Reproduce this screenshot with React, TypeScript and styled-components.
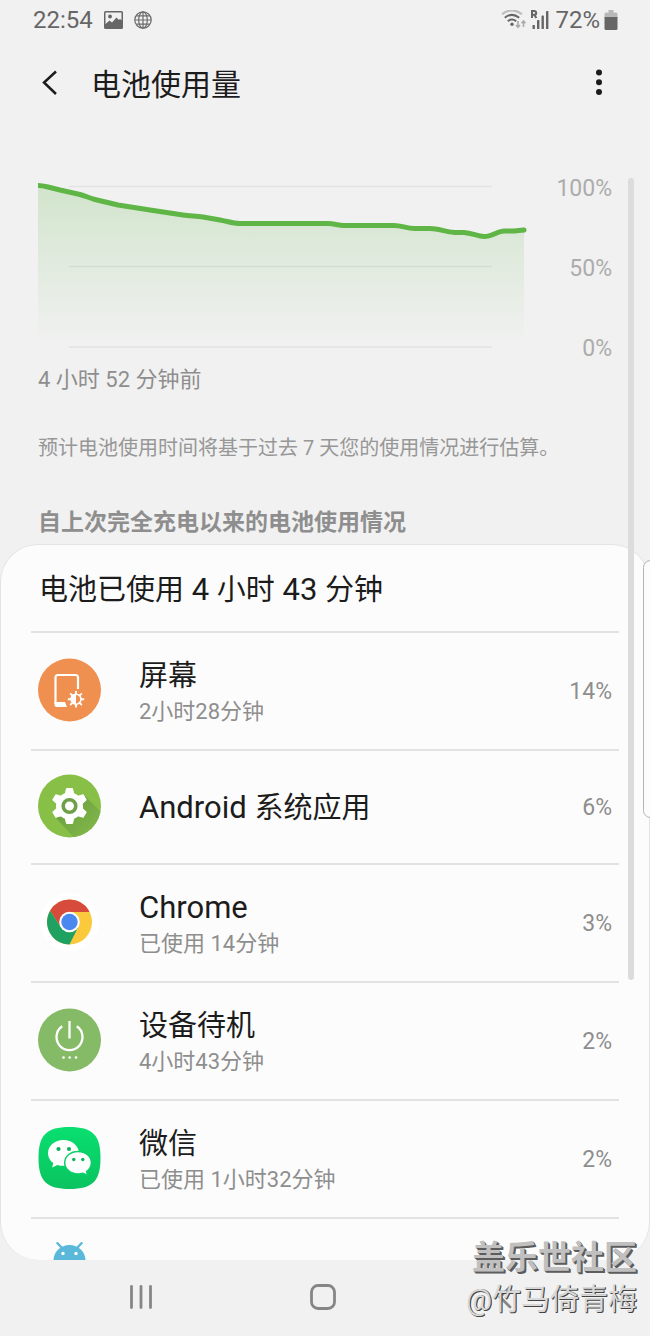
import React from 'react';
import styled, { createGlobalStyle, css } from 'styled-components';

const GlobalStyle = createGlobalStyle`
  * { box-sizing: border-box; }
  body {
    margin: 0;
    background: #f1f1f1;
    font-family: Roboto, "Noto Sans CJK SC", sans-serif;
    color: #1c1c1c;
  }
  button {
    appearance: none;
    border: 0;
    padding: 0;
    background: none;
    color: inherit;
    font: inherit;
    cursor: pointer;
  }
  h1, h2, h3, p, ul { margin: 0; padding: 0; font-weight: 400; }
  svg { display: block; }
`;

const Screen = styled.div`
  position: relative;
  display: flex;
  flex-direction: column;
  height: 100vh;
  overflow: hidden;
`;

const StatusBar = styled.div`
  display: flex;
  align-items: center;
  justify-content: space-between;
  height: 40px;
  padding: 0 32px 0 33px;
  font-size: 24px;
  line-height: 40px;
  color: #666;
`;

const StatusGroup = styled.div<{ $gap: number }>`
  display: flex;
  align-items: center;
  gap: ${(p) => p.$gap}px;
`;

const Header = styled.header`
  display: flex;
  align-items: center;
  height: 88px;
  padding: 0 39px 0 37px;
`;

const HeaderButton = styled.button`
  display: grid;
  place-items: center;
  width: 24px;
  height: 48px;
`;

const PageTitle = styled.h1`
  flex: 1;
  padding: 2px 0 0 30px;
  font-size: 30px;
  line-height: 44px;
`;

const Content = styled.main`
  flex: 1;
  min-height: 0;
  display: flex;
  flex-direction: column;
`;

const Chart = styled.section`
  display: flex;
  justify-content: space-between;
  height: 190px;
  margin: 46px 38px 0;
`;

const Plot = styled.svg`
  flex: 1;
  min-width: 0;
  height: 100%;
`;

const Axis = styled.div`
  display: flex;
  flex-direction: column;
  justify-content: space-between;
  width: 84px;
  text-align: right;
  font-size: 23px;
  line-height: 30px;
  color: #acacac;
`;

const Caption = styled.p`
  margin: 0 38px;
  font-size: 22px;
  line-height: 32px;
  color: #8e8e8e;
`;

const Note = styled.p`
  margin: 37px 38px 0;
  font-size: 20px;
  line-height: 30px;
  color: #979797;
`;

const SectionTitle = styled.h2`
  margin: 43px 38px 0;
  font-size: 23px;
  font-weight: 700;
  line-height: 34px;
  color: #8e8e8e;
`;

const Card = styled.section`
  flex: 1;
  min-height: 0;
  overflow: hidden;
  margin-top: 4px;
  padding: 0 30px;
  border: 1px solid #e4e4e4;
  border-bottom: 0;
  border-radius: 38px;
  background: #fcfcfc;
`;

const largeText = css`
  font-size: 29px;
  line-height: 40px;
`;

const CardTitle = styled.h3`
  ${largeText}
  padding: 25px 8px 21px;
`;

const Latin = styled.span`
  font-size: 31px;
`;

const Row = styled.li`
  display: flex;
  align-items: center;
  min-height: 114px;
  padding: 23px 7px 21px;
  border-top: 2px solid #e2e2e2;
`;

const RowIcon = styled.svg`
  flex: none;
  width: 64px;
  height: 64px;
  margin-bottom: 4px;
`;

const RowText = styled.div`
  flex: 1;
  padding-left: 37px;
`;

const RowTitle = styled.p`
  ${largeText}
`;

const RowDetail = styled.p`
  font-size: 22px;
  line-height: 32px;
  color: #8e8e8e;
`;

const Share = styled.span`
  font-size: 23px;
  line-height: 30px;
  color: #8e8e8e;
`;

const NavBar = styled.nav`
  display: grid;
  grid-template-columns: repeat(3, 1fr);
  flex: none;
  height: 76px;
  padding: 0 54px 2px 50px;
`;

const NavButton = styled.button`
  display: grid;
  place-items: center;
`;

const ScrollThumb = styled.div`
  position: absolute;
  top: 178px;
  right: 16px;
  width: 6px;
  height: 802px;
  border-radius: 3px;
  background: #dcdcdc;
`;

const EdgeHandle = styled.div`
  position: absolute;
  top: 560px;
  right: -8px;
  width: 15px;
  height: 258px;
  border: 1px solid #b4b4b4;
  border-radius: 8px;
  background: #fcfcfc;
`;

const Watermark = styled.div`
  position: absolute;
  right: 13px;
  bottom: 16px;
  text-align: right;
  pointer-events: none;
`;

const WatermarkName = styled.p`
  font-size: 33px;
  font-weight: 700;
  line-height: 44px;
  color: #c0c0c0;
  text-shadow: 1px 1px 0 #5c5c5c, 2px 2px 0 #5c5c5c;
`;

const WatermarkUser = styled.p`
  font-size: 29px;
  line-height: 40px;
  color: #d8d8d8;
  text-shadow: 1px 1px 0 #444, 1px 0 0 #666;
`;

/* Latin runs, with the spaces round them, are set slightly larger than the Chinese text. */
const MixedText = ({ text }: { text: string }) => (
  <>
    {text.split(/([A-Za-z0-9 ]+)/).map((part, i) =>
      i % 2 ? <Latin key={i}>{part}</Latin> : part
    )}
  </>
);

const PictureIcon = () => (
  <svg width="19" height="18" viewBox="0 0 19 18">
    <path fillRule="evenodd" fill="#666" d="M1.500 0h16a1.500 1.500 0 0 1 1.500 1.500v15a1.500 1.500 0 0 1-1.500 1.500h-16A1.500 1.500 0 0 1 0 16.500v-15A1.500 1.500 0 0 1 1.500 0zM1.500 1.500v11.500l4-3.500 2.500 2 4.500-5 2.500 2.500 1-1.300 1.500 1.800V1.500z" />
    <circle cx="6" cy="5.500" r="1.900" fill="#666" />
  </svg>
);

const GlobeIcon = () => (
  <svg width="18" height="18" viewBox="0 0 18 18" fill="none" stroke="#6c6c6c" strokeWidth="1.200">
    <circle cx="9" cy="9" r="8.200" />
    <ellipse cx="9" cy="9" rx="4.300" ry="8.200" />
    <path d="M9 1v16M.8 9h16.400M2.200 4.800h13.600M2.200 13.200h13.600" />
  </svg>
);

const WifiIcon = () => (
  <svg width="26" height="20" viewBox="0 0 26 20" fill="none" strokeWidth="2">
    <path d="M1 4.200Q11 -3.500 21 4.200" stroke="#bdbdbd" />
    <path d="M3.800 7.700Q11 2 18.200 7.700M6.800 11.200Q11 7.800 15.200 11.200" stroke="#666" />
    <circle cx="11" cy="14.300" r="1.700" fill="#666" />
    <path d="M17 11v6M15 15l2 2.200 2-2.200M22.500 17v-6M20.500 13.200l2-2.200 2 2.200" stroke="#ababab" strokeWidth="1.600" />
  </svg>
);

const SignalIcon = () => (
  <svg width="20" height="20" viewBox="0 0 20 20" fill="#666">
    <path d="M1 8V1h2.300a1.900 1.900 0 0 1 0 3.800H1M3.200 4.800l2.200 3.200" fill="none" stroke="#666" strokeWidth="2" />
    <rect x="1.500" y="15" width="2.400" height="4" rx=".6" />
    <rect x="6" y="10" width="2.400" height="9" rx=".6" />
    <rect x="10.500" y="5.500" width="2.400" height="13.500" rx=".6" />
    <rect x="15" y="1" width="2.400" height="18" rx=".6" />
  </svg>
);

const BatteryIcon = () => (
  <svg width="14" height="20" viewBox="0 0 14 20">
    <path d="M4.500 0h5v2.500H12a1.500 1.500 0 0 1 1.500 1.500v4H.5V4A1.500 1.500 0 0 1 2 2.500h2.500z" fill="#b9b9b9" />
    <path d="M.5 7h13v11.500a1.500 1.500 0 0 1-1.500 1.500H2A1.500 1.500 0 0 1 .5 18.500z" fill="#666" />
  </svg>
);

const ScreenIcon = () => (
  <RowIcon viewBox="0 0 64 64">
    <circle cx="31.500" cy="32" r="31.500" fill="#ef8f50" />
    <path d="M40 31V19.500a2.500 2.500 0 0 0-2.500-2.500H20a2.500 2.500 0 0 0-2.500 2.500V46" fill="none" stroke="#fff" strokeWidth="2.200" />
    <path d="M16.500 44h10.500l2 5H19a2.500 2.500 0 0 1-2.500-2.500z" fill="#fff" />
    <path d="M38 33v3M38 46v3.500M29.800 41.200h3M43.200 41.200h3M32.200 35.400l2.200 2.200M41.600 44.800l2.200 2.200M32.200 47l2.200-2.200M41.600 37.600l2.200-2.200" stroke="#fff" strokeWidth="1.900" />
    <circle cx="38" cy="41.200" r="5" fill="none" stroke="#fff" strokeWidth="1.600" />
    <path d="M38 36.200a5 5 0 0 0 0 10z" fill="#fff" />
  </RowIcon>
);

const SystemIcon = () => (
  <RowIcon viewBox="0 0 64 64">
    <defs>
      <clipPath id="system-disc"><circle cx="31.500" cy="32" r="31.500" /></clipPath>
      <linearGradient id="system-shadow" gradientUnits="userSpaceOnUse" x1="32" y1="32" x2="54" y2="56">
        <stop offset="0" stopColor="#6fa342" />
        <stop offset="1" stopColor="#7fb548" />
      </linearGradient>
    </defs>
    <circle cx="31.500" cy="32" r="31.500" fill="#87bf47" />
    <path d="M47 22l24 24-8 24H42L18 44z" fill="url(#system-shadow)" clipPath="url(#system-disc)" />
    <g fill="#fff">
      <circle cx="31.500" cy="32" r="13.500" />
      {[0, 60, 120, 180, 240, 300].map((angle) => (
        <path key={angle} d="M28.500 14.500h6l1.800 8h-9.600z" stroke="#fff" strokeLinejoin="round" transform={`rotate(${angle} 31.500 32)`} />
      ))}
    </g>
    <circle cx="31.500" cy="32" r="6.300" fill="#fff" stroke="#6fa048" strokeWidth="3.600" />
  </RowIcon>
);

const ChromeIcon = () => (
  <RowIcon viewBox="0 0 64 64">
    <circle cx="31.500" cy="32" r="29" fill="#fff" />
    <circle cx="31.500" cy="32" r="22.500" fill="#fbc93c" />
    <path d="M12 20.800A22.500 22.500 0 0 1 51 20.800L51.300 22H31.500L22.800 37z" fill="#d64b3c" />
    <path d="M12 20.800A22.500 22.500 0 0 0 31.500 54.500L40.200 37H22.800z" fill="#1fa261" />
    <circle cx="31.500" cy="32" r="10.300" fill="#fff" />
    <circle cx="31.500" cy="32" r="8.200" fill="#4a87ee" />
  </RowIcon>
);

const StandbyIcon = () => (
  <RowIcon viewBox="0 0 64 64">
    <circle cx="31.500" cy="32" r="31.500" fill="#85bb67" />
    <g fill="none" stroke="#fff" strokeWidth="2.300">
      <path d="M31.500 13v17.500" />
      <path d="M24.200 18.300a13 13 0 1 0 14.600 0" />
    </g>
    <g fill="#fff">
      <circle cx="25.500" cy="49.500" r="1.300" />
      <circle cx="31.700" cy="49.500" r="1.300" />
      <circle cx="38" cy="49.500" r="1.300" />
    </g>
  </RowIcon>
);

const WeChatIcon = () => (
  <RowIcon viewBox="0 0 64 64">
    <defs>
      <linearGradient id="wechat-tile" x1="0" y1="0" x2="0" y2="1">
        <stop offset="0" stopColor="#09df70" />
        <stop offset="1" stopColor="#0ac35f" />
      </linearGradient>
    </defs>
    <path d="M31.500 1C54.500 1 62.500 9 62.500 32S54.500 63 31.500 63 .5 55 .5 32 8.500 1 31.500 1z" fill="url(#wechat-tile)" />
    <path d="M25.500 14C16.800 14 10 19.800 10 27.200c0 4 2 7.500 5.300 9.900L14.200 41.500l5.200-2.600c2 .6 4 .9 6.100.9 8.700 0 15.500-5.600 15.500-12.600S34.200 14 25.500 14z" fill="#fff" />
    <path d="M40 25.500c-7.500 0-13.300 5-13.300 11.200S32.500 48 40 48c1.700 0 3.400-.3 5-.8l4.600 2.300-1-3.900c2.900-2 4.800-5.200 4.800-8.900 0-6.200-5.900-11.200-13.400-11.200z" fill="#fff" stroke="#09d067" strokeWidth="1.500" />
    <g fill="#0ab45c">
      <circle cx="20.500" cy="23" r="2.100" />
      <circle cx="31" cy="23" r="2.100" />
      <circle cx="35.800" cy="33.500" r="1.700" />
      <circle cx="44.800" cy="33.500" r="1.700" />
    </g>
  </RowIcon>
);

const AndroidIcon = () => (
  <RowIcon viewBox="0 0 64 64">
    <path d="M19.500 1.200l5 5.300M43.500 1.200l-5 5.300" stroke="#5ab9db" strokeWidth="2.400" strokeLinecap="round" />
    <path d="M15.500 18.500a16 15.500 0 0 1 32 0z" fill="#5ab9db" />
    <circle cx="25" cy="11.500" r="1.700" fill="#fff" />
    <circle cx="38" cy="11.500" r="1.700" fill="#fff" />
  </RowIcon>
);

const LINE =
  'M0 12.500C3 12.500 6 13 10 14L22 17L42 21.500C47 23 52 25 57 26.500L80 32L112 37L145 42C152 43 158 43 165 44L182 47C190 48.500 195 50.500 202 50.500H290C296 50.500 300 52.500 306 52.500H356C364 52.500 368 55.500 377 55.500H392C401 55.500 407 59 417 59.500H426C434 60 440 63.500 446 63.500C454 63.500 460 58 466 58H476L486 57';

const usage = [
  { Icon: ScreenIcon, name: '屏幕', detail: '2小时28分钟', share: '14%' },
  { Icon: SystemIcon, name: 'Android 系统应用', share: '6%' },
  { Icon: ChromeIcon, name: 'Chrome', detail: '已使用 14分钟', share: '3%' },
  { Icon: StandbyIcon, name: '设备待机', detail: '4小时43分钟', share: '2%' },
  { Icon: WeChatIcon, name: '微信', detail: '已使用 1小时32分钟', share: '2%' },
];

export default function App() {
  return (
    <>
      <GlobalStyle />
      <Screen>
        <StatusBar>
          <StatusGroup $gap={11}>
            <span>22:54</span>
            <PictureIcon />
            <GlobeIcon />
          </StatusGroup>
          <StatusGroup $gap={4}>
            <WifiIcon />
            <SignalIcon />
            <span>72%</span>
            <BatteryIcon />
          </StatusGroup>
        </StatusBar>

        <Header>
          <HeaderButton aria-label="返回">
            <svg width="20" height="28" viewBox="0 0 20 28" fill="none" stroke="#1c1c1c" strokeWidth="2.500">
              <path d="M17 1.500L5 12.500L17 24" />
            </svg>
          </HeaderButton>
          <PageTitle>电池使用量</PageTitle>
          <HeaderButton aria-label="更多选项">
            <svg width="8" height="30" viewBox="0 0 8 30" fill="#1c1c1c">
              <circle cx="4" cy="3.500" r="3" />
              <circle cx="4" cy="13.200" r="3" />
              <circle cx="4" cy="23" r="3" />
            </svg>
          </HeaderButton>
        </Header>

        <Content>
          <Chart>
            <Plot viewBox="0 1 490 190" preserveAspectRatio="none">
              <defs>
                <linearGradient id="level" gradientUnits="userSpaceOnUse" x1="0" y1="12" x2="0" y2="172">
                  <stop offset="0" stopColor="#62b74a" stopOpacity=".22" />
                  <stop offset=".5" stopColor="#62b74a" stopOpacity=".11" />
                  <stop offset="1" stopColor="#62b74a" stopOpacity="0" />
                </linearGradient>
              </defs>
              <path d={`${LINE}V172H0z`} fill="url(#level)" />
              <path d="M31 13.500H454M31 93.500H454M31 174H454" stroke="#000" strokeOpacity=".06" strokeWidth="1.500" />
              <path d={LINE} fill="none" stroke="#5fb646" strokeWidth="5" strokeLinejoin="round" />
              <circle cx="486" cy="57" r="2.500" fill="#5fb646" />
            </Plot>
            <Axis>
              <span>100%</span>
              <span>50%</span>
              <span>0%</span>
            </Axis>
          </Chart>
          <Caption>4 小时 52 分钟前</Caption>
          <Note>预计电池使用时间将基于过去 7 天您的使用情况进行估算。</Note>
          <SectionTitle>自上次完全充电以来的电池使用情况</SectionTitle>

          <Card>
            <CardTitle>
              <MixedText text="电池已使用 4 小时 43 分钟" />
            </CardTitle>
            <ul>
              {usage.map(({ Icon, name, detail, share }) => (
                <Row key={name}>
                  <Icon />
                  <RowText>
                    <RowTitle><MixedText text={name} /></RowTitle>
                    {detail && <RowDetail>{detail}</RowDetail>}
                  </RowText>
                  <Share>{share}</Share>
                </Row>
              ))}
              <Row>
                <AndroidIcon />
              </Row>
            </ul>
          </Card>
        </Content>

        <NavBar>
          <NavButton aria-label="最近任务">
            <svg width="24" height="24" viewBox="0 0 24 24" stroke="#868686" strokeWidth="2.800" strokeLinecap="round">
              <path d="M2.500 1.500v21M12 1.500v21M21.500 1.500v21" />
            </svg>
          </NavButton>
          <NavButton aria-label="主屏幕">
            <svg width="26" height="26" viewBox="0 0 26 26" fill="none" stroke="#868686" strokeWidth="2.800">
              <rect x="1.500" y="1.500" width="23" height="23" rx="6.500" />
            </svg>
          </NavButton>
          <NavButton aria-label="返回上一页">
            <svg width="16" height="24" viewBox="0 0 16 24" fill="none" stroke="#868686" strokeWidth="2.800" strokeLinecap="round">
              <path d="M13 2L3 12L13 22" />
            </svg>
          </NavButton>
        </NavBar>

        <ScrollThumb />
        <EdgeHandle />
        <Watermark>
          <WatermarkName>盖乐世社区</WatermarkName>
          <WatermarkUser>@竹马倚青梅</WatermarkUser>
        </Watermark>
      </Screen>
    </>
  );
}
